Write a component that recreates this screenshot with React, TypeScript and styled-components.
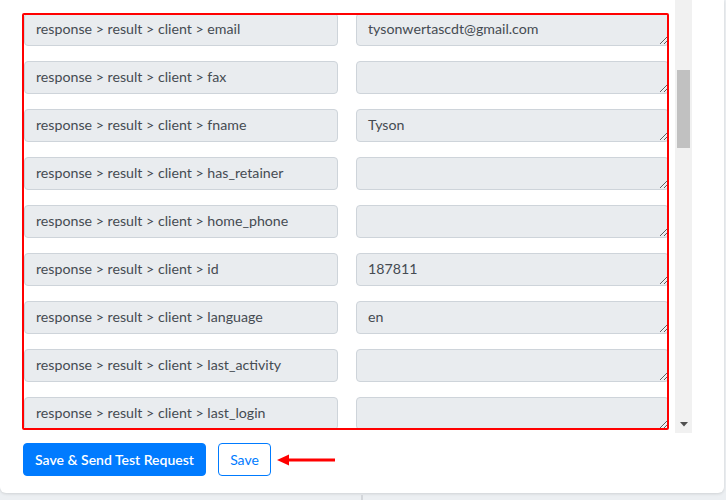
import React from "react"
import styled, { createGlobalStyle } from "styled-components"

const GlobalStyle = createGlobalStyle`
    html, body {
        margin: 0;
        padding: 0;
        background: #eceff2;
    }
    * {
        box-sizing: border-box;
    }
`

const FONT = `"Lato", "Open Sans", sans-serif`

type FieldRow = {
    path: string
    value: string
}

const rows: FieldRow[] = [
    { path: "email", value: "tysonwertascdt@gmail.com" },
    { path: "fax", value: "" },
    { path: "fname", value: "Tyson" },
    { path: "has_retainer", value: "" },
    { path: "home_phone", value: "" },
    { path: "id", value: "187811" },
    { path: "language", value: "en" },
    { path: "last_activity", value: "" },
    { path: "last_login", value: "" },
]

export default function App() {
    return (
        <>
            <GlobalStyle />
            <Page>
                <Card>
                    <ScrollArea>
                        <FieldList>
                            {rows.map((row) => (
                                <Row key={row.path}>
                                    <PathLabel>response &gt; result &gt; client &gt; {row.path}</PathLabel>
                                    <ValueBox defaultValue={row.value} rows={1} />
                                </Row>
                            ))}
                            <Highlight />
                        </FieldList>
                        <Scrollbar>
                            <ScrollThumb />
                            <ScrollArrow>
                                <svg width="8" height="5" viewBox="0 0 8 5">
                                    <path d="M0 0 L8 0 L4 4.5 Z" fill="#505050" />
                                </svg>
                            </ScrollArrow>
                        </Scrollbar>
                    </ScrollArea>
                    <Footer>
                        <PrimaryButton>Save &amp; Send Test Request</PrimaryButton>
                        <OutlineButton>Save</OutlineButton>
                        <Pointer width="60" height="12" viewBox="0 0 60 12">
                            <path d="M0 6 L12 0.5 L12 11.5 Z" fill="#ff0000" />
                            <rect x="10" y="4.5" width="48" height="3" fill="#ff0000" />
                        </Pointer>
                    </Footer>
                </Card>
                <BelowStrip>
                    <Divider />
                </BelowStrip>
            </Page>
        </>
    )
}

const Page = styled.div`
    width: 726px;
    height: 500px;
    overflow: hidden;
    font-family: ${FONT};
`

const Card = styled.div`
    width: 724px;
    height: 493px;
    background: #fff;
    border-radius: 0 0 6px 6px;
    box-shadow: 0 1px 3px rgba(0, 0, 0, 0.12);
    display: flex;
    flex-direction: column;
`

const ScrollArea = styled.div`
    height: 433px;
    width: 692px;
    display: flex;
    overflow: hidden;
`

const FieldList = styled.div`
    position: relative;
    flex: 1;
    padding: 13px 6px 0 24px;
    display: flex;
    flex-direction: column;
    gap: 15px;
`

const Row = styled.div`
    display: grid;
    grid-template-columns: 314px 313px;
    column-gap: 18px;
`

const PathLabel = styled.div`
    height: 33px;
    padding: 0 11px;
    background: #e9ecef;
    border: 1px solid #ced4da;
    border-radius: 4px;
    color: #454b52;
    font-size: 14.2px;
    line-height: 29px;
    white-space: nowrap;
`

const ValueBox = styled.textarea`
    height: 33px;
    padding: 4px 11px 6px;
    background: #e9ecef;
    border: 1px solid #ced4da;
    border-radius: 4px;
    color: #454b52;
    font-family: ${FONT};
    font-size: 14.2px;
    line-height: 21px;
    resize: vertical;
    overflow: hidden;
    outline: none;
`

const Highlight = styled.div`
    position: absolute;
    left: 22px;
    top: 13px;
    width: 647px;
    height: 417px;
    border: 2px solid #ff0000;
    border-radius: 2px;
    pointer-events: none;
`

const Scrollbar = styled.div`
    width: 17px;
    flex-shrink: 0;
    background: #f1f1f1;
    display: flex;
    flex-direction: column;
    align-items: center;
    padding-top: 70px;
`

const ScrollThumb = styled.div`
    width: 13px;
    height: 78px;
    background: #c1c1c1;
`

const ScrollArrow = styled.div`
    margin-top: auto;
    height: 17px;
    display: flex;
    align-items: center;
    justify-content: center;
`

const Footer = styled.div`
    display: flex;
    align-items: center;
    gap: 12px;
    padding: 10px 0 0 23px;
`

const PrimaryButton = styled.button`
    height: 33px;
    width: 183px;
    padding: 0;
    background: #007bff;
    border: 1px solid #007bff;
    border-radius: 4px;
    color: #fff;
    font-family: ${FONT};
    font-size: 14px;
    font-weight: 600;
`

const OutlineButton = styled.button`
    height: 33px;
    width: 53px;
    padding: 0;
    background: #fff;
    border: 1px solid #007bff;
    border-radius: 4px;
    color: #007bff;
    font-family: ${FONT};
    font-size: 14px;
`

const Pointer = styled.svg`
    margin-left: -6px;
`

const BelowStrip = styled.div`
    height: 7px;
    padding-left: 361px;
`

const Divider = styled.div`
    width: 2px;
    height: 100%;
    margin-top: 2px;
    background: #d3d6da;
`
